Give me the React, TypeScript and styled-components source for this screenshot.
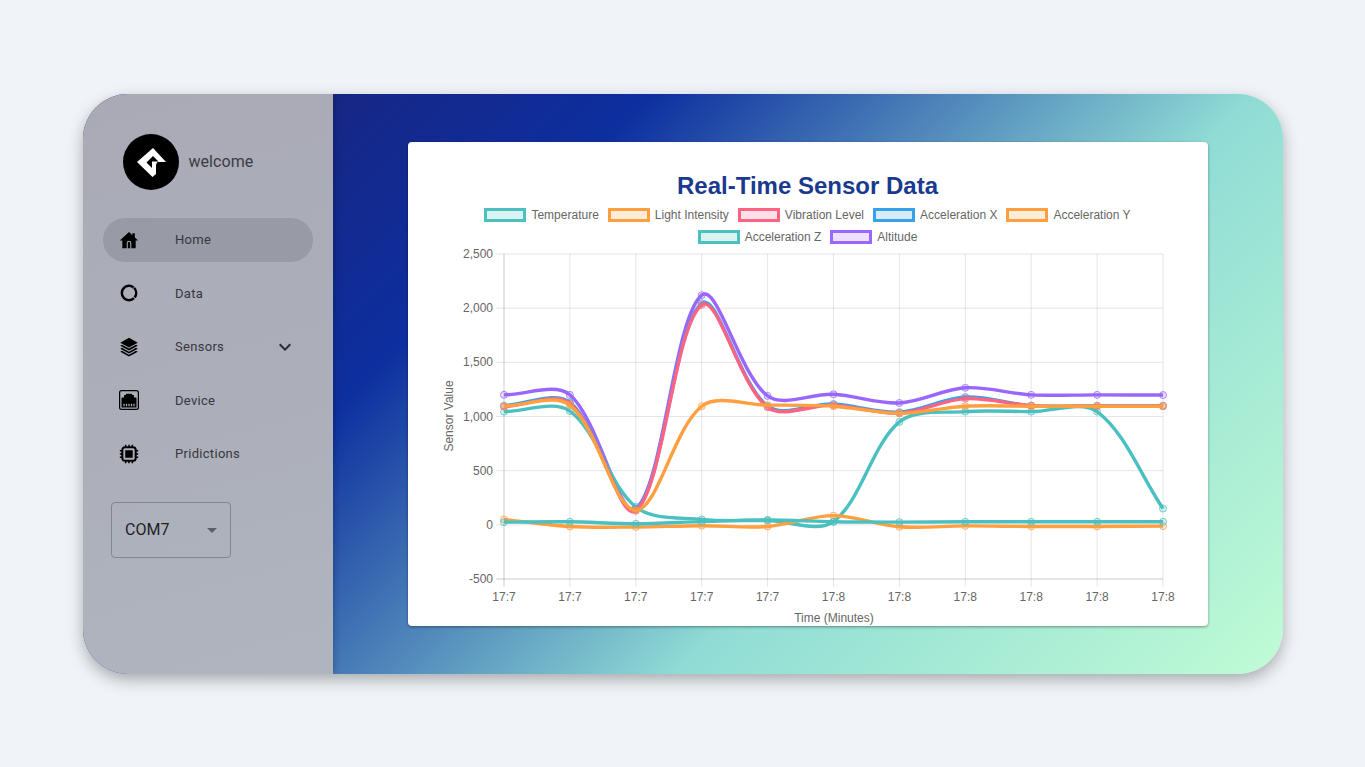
import React from 'react';
import styled, { createGlobalStyle } from 'styled-components';
import { BsEthernet } from 'react-icons/bs';
import { MdExpandMore, MdArrowDropDown } from 'react-icons/md';

const GlobalStyle = createGlobalStyle`
  html, body {
    margin: 0;
    height: 100%;
    background: #f0f4f8;
    font-family: Roboto, "Liberation Sans", sans-serif;
  }
`;

const Page = styled.div`
  width: 100%;
  height: 767px;
  display: flex;
  align-items: center;
  justify-content: center;
`;

const Shell = styled.div`
  width: 1200px;
  height: 580px;
  display: flex;
  border-radius: 45px;
  overflow: hidden;
  box-shadow: 0 6px 16px rgba(0, 0, 0, 0.3);
  background: linear-gradient(135deg, #1f1f70 0%, #0d2f9f 32%, #90dcd5 66%, #c0fcd5 100%);
`;

const Sidebar = styled.aside`
  width: 250px;
  flex-shrink: 0;
  box-sizing: border-box;
  padding: 40px 20px 0;
  background: linear-gradient(165deg, #a9aab6 0%, #acafba 55%, #afb5bf 100%);
  box-shadow: 2px 0 6px rgba(0, 0, 0, 0.18);
  z-index: 1;
`;

const Brand = styled.div`
  display: flex;
  align-items: center;
  gap: 10px;
  padding-left: 20px;
  margin-bottom: 28px;
`;

const LogoCircle = styled.div`
  width: 56px;
  height: 56px;
  border-radius: 50%;
  background: #000;
  display: flex;
  align-items: center;
  justify-content: center;
`;

const Welcome = styled.span`
  font-size: 16px;
  letter-spacing: 0.05px;
  color: #3c3c42;
`;

const Nav = styled.nav`
  display: flex;
  flex-direction: column;
  gap: 9.5px;
`;

const NavItem = styled.div<{ $active?: boolean }>`
  height: 44px;
  display: flex;
  align-items: center;
  padding: 0 16px;
  border-radius: 22px;
  background: ${(p) => (p.$active ? '#989aa5' : 'transparent')};
`;

const NavIcon = styled.span`
  width: 56.5px;
  display: flex;
  align-items: center;
  color: #000;
`;

const NavLabel = styled.span`
  flex: 1;
  font-size: 13px;
  letter-spacing: 0.3px;
  color: #37373d;
`;

const Chevron = styled(MdExpandMore)`
  font-size: 24px;
  color: #2c2c30;
`;

const PortSelect = styled.div`
  width: 120px;
  height: 56px;
  box-sizing: border-box;
  margin: 26.5px 0 0 8px;
  padding: 0 6px 2px 13.5px;
  display: flex;
  align-items: center;
  justify-content: space-between;
  border: 1px solid #83858f;
  border-radius: 4px;
  font-size: 16px;
  color: #1f1f24;
`;

const SelectArrow = styled(MdArrowDropDown)`
  font-size: 24px;
  color: #5d5e66;
  position: relative;
  top: 1px;
`;

const Main = styled.main`
  flex: 1;
  box-sizing: border-box;
  padding: 48px 75px;
`;

const Panel = styled.section`
  height: 484px;
  background: #fff;
  border-radius: 4px;
  box-shadow: 0 1px 3px rgba(0, 0, 0, 0.4);
  box-sizing: border-box;
  padding-top: 30px;
  display: flex;
  flex-direction: column;
  overflow: hidden;
`;

const ChartTitle = styled.h2`
  margin: 0;
  height: 28px;
  line-height: 28px;
  text-align: center;
  font-family: "Liberation Sans", Arial, sans-serif;
  font-size: 24px;
  font-weight: 700;
  color: #1a3a8f;
`;

const Legend = styled.div`
  width: 700px;
  margin: 4px auto 0;
  display: flex;
  flex-wrap: wrap;
  justify-content: center;
  column-gap: 9px;
  row-gap: 0;
`;

const LegendItem = styled.div`
  height: 22px;
  display: flex;
  align-items: center;
  gap: 5px;
  font-family: "Liberation Sans", Arial, sans-serif;
  font-size: 12px;
  color: #666;
`;

const Swatch = styled.span<{ $color: string; $fill: string }>`
  width: 42px;
  height: 14px;
  box-sizing: border-box;
  border: 3px solid ${(p) => p.$color};
  background: ${(p) => p.$fill};
`;

const ChartSvg = styled.svg`
  display: block;
  flex-shrink: 0;
`;

const AxisText = styled.text`
  font-family: "Liberation Sans", Arial, sans-serif;
  font-size: 12px;
  fill: #666;
`;

const HomeIcon = () => (
  <svg width="20" height="20" viewBox="0 0 24 24" fill="currentColor">
    <path
      fillRule="evenodd"
      d="M12 2.5 1 12.5h3V22h5.2v-6.3a2.8 2.8 0 0 1 5.6 0V22H20v-9.5h3l-4-3.6V4h-3v2.2z"
    />
    <path d="M10.6 22v-6.3a1.4 1.4 0 0 1 2.8 0V22z" />
  </svg>
);

const RingIcon = () => (
  <svg width="20" height="20" viewBox="0 0 24 24" fill="none" stroke="currentColor" strokeWidth="3">
    <circle cx="12" cy="12" r="8.6" strokeDasharray="12.3 1.2 39.3 1.2" transform="rotate(-45 12 12)" />
  </svg>
);

const StackIcon = () => (
  <svg width="20" height="20" viewBox="0 0 24 24" fill="currentColor">
    <path d="M12 1 22.5 6.8 12 12.6 1.5 6.8z" />
    <path d="M3.6 9.2 1.5 10.4 12 16.2l10.5-5.8-2.1-1.2L12 13.9z" />
    <path d="M3.6 12.9 1.5 14.1 12 19.9l10.5-5.8-2.1-1.2L12 17.6z" />
    <path d="M3.6 16.5 1.5 17.7 12 23.5l10.5-5.8-2.1-1.2L12 21.2z" />
  </svg>
);

const ChipIcon = () => (
  <svg width="20" height="20" viewBox="0 0 24 24">
    <path
      stroke="currentColor"
      strokeWidth="1.8"
      d="M8 1v3M12 1v3M16 1v3M8 20v3M12 20v3M16 20v3M1 8h3M1 12h3M1 16h3M20 8h3M20 12h3M20 16h3"
    />
    <rect x="4" y="4" width="16" height="16" rx="3" fill="none" stroke="currentColor" strokeWidth="2.4" />
    <rect x="7.5" y="7.5" width="9" height="9" fill="currentColor" />
  </svg>
);

const BrandMark = () => (
  <svg width="36" height="36" viewBox="0 0 36 36" fill="#fff">
    <path
      fillRule="evenodd"
      d="M20 4 33 18H24.5L23 20.5V30L19.5 33 4 18ZM20 12 13.5 18.5 19 24V17.5H25.5Z"
    />
  </svg>
);

// chart geometry, in the svg's own pixels
const PLOT = { left: 96, right: 755, top: 6, bottom: 331 };
const CHART_W = 800;
const CHART_H = 378;
const TENSION = 0.33;
const MIN_V = -500;
const MAX_V = 2500;

const xAt = (i: number) => PLOT.left + (i * (PLOT.right - PLOT.left)) / 10;
const yAt = (v: number) => PLOT.bottom - ((v - MIN_V) / (MAX_V - MIN_V)) * (PLOT.bottom - PLOT.top);

interface Series {
  label: string;
  color: string;
  fill: string;
  data: number[];
}

const TEAL = '#4bc0c0';
const ORANGE = '#ff9f40';
const TEAL_FILL = 'rgba(75, 192, 192, 0.2)';
const ORANGE_FILL = 'rgba(255, 159, 64, 0.2)';

const SERIES: Series[] = [
  { label: 'Temperature', color: TEAL, fill: TEAL_FILL, data: [25, 28, 10, 30, 45, 28, 25, 28, 28, 28, 28] },
  { label: 'Light Intensity', color: ORANGE, fill: ORANGE_FILL, data: [1095, 1105, 135, 1095, 1105, 1095, 1030, 1095, 1095, 1095, 1095] },
  { label: 'Vibration Level', color: '#ff6384', fill: 'rgba(255, 99, 132, 0.2)', data: [1090, 1120, 130, 2030, 1085, 1105, 1030, 1165, 1100, 1095, 1095] },
  { label: 'Acceleration X', color: '#36a2eb', fill: 'rgba(54, 162, 235, 0.2)', data: [1100, 1130, 140, 2045, 1095, 1115, 1040, 1180, 1100, 1100, 1100] },
  { label: 'Acceleration Y', color: ORANGE, fill: ORANGE_FILL, data: [50, -15, -20, -8, -15, 85, -18, -10, -15, -15, -12] },
  { label: 'Acceleration Z', color: TEAL, fill: TEAL_FILL, data: [1045, 1050, 165, 50, 40, 30, 950, 1045, 1045, 1045, 150] },
  { label: 'Altitude', color: '#9966ff', fill: 'rgba(153, 102, 255, 0.2)', data: [1200, 1200, 150, 2120, 1190, 1205, 1125, 1265, 1200, 1200, 1198] },
];

// same spline the charting library uses for a line with tension
const linePath = (data: number[]) => {
  const pts = data.map((v, i) => ({ x: xAt(i), y: yAt(v) }));
  const handles = pts.map((cur, i) => {
    const prev = pts[i - 1] ?? cur;
    const next = pts[i + 1] ?? cur;
    const d01 = Math.hypot(cur.x - prev.x, cur.y - prev.y);
    const d12 = Math.hypot(next.x - cur.x, next.y - cur.y);
    const total = d01 + d12 || 1;
    const dx = next.x - prev.x;
    const dy = next.y - prev.y;
    return {
      inX: cur.x - (TENSION * d01 * dx) / total,
      inY: cur.y - (TENSION * d01 * dy) / total,
      outX: cur.x + (TENSION * d12 * dx) / total,
      outY: cur.y + (TENSION * d12 * dy) / total,
    };
  });
  let d = `M${pts[0].x} ${pts[0].y}`;
  for (let i = 1; i < pts.length; i++) {
    const a = handles[i - 1];
    const b = handles[i];
    d += `C${a.outX} ${a.outY} ${b.inX} ${b.inY} ${pts[i].x} ${pts[i].y}`;
  }
  return d;
};

const SensorChart = () => {
  const ticks = [2500, 2000, 1500, 1000, 500, 0, -500];
  const minutes = ['17:7', '17:7', '17:7', '17:7', '17:7', '17:8', '17:8', '17:8', '17:8', '17:8', '17:8'];
  return (
    <ChartSvg width={CHART_W} height={CHART_H} viewBox={`0 0 ${CHART_W} ${CHART_H}`}>
      {ticks.map((t) => (
        <g key={t}>
          <line
            x1={PLOT.left - 8}
            x2={PLOT.right}
            y1={yAt(t)}
            y2={yAt(t)}
            stroke={t === MIN_V ? 'rgba(0,0,0,0.2)' : 'rgba(0,0,0,0.1)'}
          />
          <AxisText x={PLOT.left - 11} y={yAt(t) + 4} textAnchor="end">
            {t.toLocaleString('en-US')}
          </AxisText>
        </g>
      ))}
      {minutes.map((m, i) => (
        <g key={i}>
          <line
            x1={xAt(i)}
            x2={xAt(i)}
            y1={PLOT.top}
            y2={PLOT.bottom + 8}
            stroke={i === 0 ? 'rgba(0,0,0,0.2)' : 'rgba(0,0,0,0.1)'}
          />
          <AxisText x={xAt(i)} y={PLOT.bottom + 22} textAnchor="middle">
            {m}
          </AxisText>
        </g>
      ))}
      {/* first series ends up on top */}
      {[...SERIES].reverse().map((s) => (
        <g key={s.label}>
          <path d={linePath(s.data)} fill="none" stroke={s.color} strokeWidth="3.4" />
          {s.data.map((v, i) => (
            <circle key={i} cx={xAt(i)} cy={yAt(v)} r="3.5" fill={s.fill} stroke={s.color} strokeOpacity="0.75" strokeWidth="1" />
          ))}
        </g>
      ))}
      <AxisText x={0} y={0} textAnchor="middle" transform="translate(45 168) rotate(-90)">
        Sensor Value
      </AxisText>
      <AxisText x={426} y={374} textAnchor="middle">
        Time (Minutes)
      </AxisText>
    </ChartSvg>
  );
};

export default function App() {
  return (
    <>
      <GlobalStyle />
      <Page>
        <Shell>
          <Sidebar>
            <Brand>
              <LogoCircle>
                <BrandMark />
              </LogoCircle>
              <Welcome>welcome</Welcome>
            </Brand>
            <Nav>
              <NavItem $active>
                <NavIcon><HomeIcon /></NavIcon>
                <NavLabel>Home</NavLabel>
              </NavItem>
              <NavItem>
                <NavIcon><RingIcon /></NavIcon>
                <NavLabel>Data</NavLabel>
              </NavItem>
              <NavItem>
                <NavIcon><StackIcon /></NavIcon>
                <NavLabel>Sensors</NavLabel>
                <Chevron />
              </NavItem>
              <NavItem>
                <NavIcon><BsEthernet size={20} /></NavIcon>
                <NavLabel>Device</NavLabel>
              </NavItem>
              <NavItem>
                <NavIcon><ChipIcon /></NavIcon>
                <NavLabel>Pridictions</NavLabel>
              </NavItem>
            </Nav>
            <PortSelect>
              COM7
              <SelectArrow />
            </PortSelect>
          </Sidebar>
          <Main>
            <Panel>
              <ChartTitle>Real-Time Sensor Data</ChartTitle>
              <Legend>
                {SERIES.map((s) => (
                  <LegendItem key={s.label}>
                    <Swatch $color={s.color} $fill={s.fill} />
                    {s.label}
                  </LegendItem>
                ))}
              </Legend>
              <SensorChart />
            </Panel>
          </Main>
        </Shell>
      </Page>
    </>
  );
}
